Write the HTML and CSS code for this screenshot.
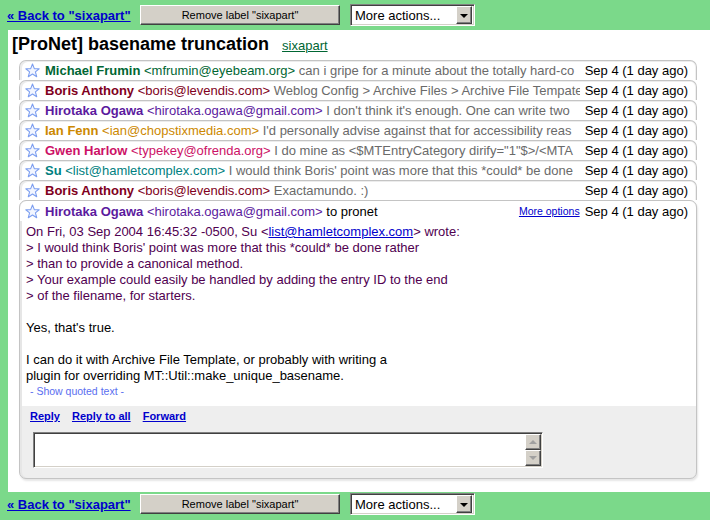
FILE: index.html
```html
<!DOCTYPE html>
<html>
<head>
<meta charset="utf-8">
<link rel="stylesheet" href="styles.css">
</head>
<body>
<div class="bar">
  <a class="back" href="#">« Back to "sixapart"</a>
  <button class="btn">Remove label "sixapart"</button>
  <div class="select"><span>More actions...</span><span class="drop"><span class="tri"></span></span></div>
</div>
<div class="main">
  <div class="title"><h1>[ProNet] basename truncation</h1><a class="label" href="#">sixapart</a></div>
  <div class="thread">
    <div class="row">
      <svg class="star" viewBox="0 0 15 15"><polygon points="7.5,1 9.3,5.6 14.2,5.8 10.4,8.9 11.7,13.7 7.5,11 3.3,13.7 4.6,8.9 0.8,5.8 5.7,5.6"/></svg>
      <span class="summary"><span class="who c-green">Michael Frumin</span> <span class="c-green">&lt;mfrumin@eyebeam.org&gt;</span> <span class="snip">can i gripe for a minute about the totally hard-co</span></span>
      <span class="date">Sep 4 (1 day ago)</span>
    </div>
    <div class="row">
      <svg class="star" viewBox="0 0 15 15"><polygon points="7.5,1 9.3,5.6 14.2,5.8 10.4,8.9 11.7,13.7 7.5,11 3.3,13.7 4.6,8.9 0.8,5.8 5.7,5.6"/></svg>
      <span class="summary"><span class="who c-red">Boris Anthony</span> <span class="c-red">&lt;boris@levendis.com&gt;</span> <span class="snip">Weblog Config &gt; Archive Files &gt; Archive File Tempate</span></span>
      <span class="date">Sep 4 (1 day ago)</span>
    </div>
    <div class="row">
      <svg class="star" viewBox="0 0 15 15"><polygon points="7.5,1 9.3,5.6 14.2,5.8 10.4,8.9 11.7,13.7 7.5,11 3.3,13.7 4.6,8.9 0.8,5.8 5.7,5.6"/></svg>
      <span class="summary"><span class="who c-purple">Hirotaka Ogawa</span> <span class="c-purple">&lt;hirotaka.ogawa@gmail.com&gt;</span> <span class="snip">I don't think it's enough. One can write two</span></span>
      <span class="date">Sep 4 (1 day ago)</span>
    </div>
    <div class="row">
      <svg class="star" viewBox="0 0 15 15"><polygon points="7.5,1 9.3,5.6 14.2,5.8 10.4,8.9 11.7,13.7 7.5,11 3.3,13.7 4.6,8.9 0.8,5.8 5.7,5.6"/></svg>
      <span class="summary"><span class="who c-orange">Ian Fenn</span> <span class="c-orange">&lt;ian@chopstixmedia.com&gt;</span> <span class="snip">I'd personally advise against that for accessibility reas</span></span>
      <span class="date">Sep 4 (1 day ago)</span>
    </div>
    <div class="row">
      <svg class="star" viewBox="0 0 15 15"><polygon points="7.5,1 9.3,5.6 14.2,5.8 10.4,8.9 11.7,13.7 7.5,11 3.3,13.7 4.6,8.9 0.8,5.8 5.7,5.6"/></svg>
      <span class="summary"><span class="who c-pink">Gwen Harlow</span> <span class="c-pink">&lt;typekey@ofrenda.org&gt;</span> <span class="snip">I do mine as &lt;$MTEntryCategory dirify="1"$&gt;/&lt;MTA</span></span>
      <span class="date">Sep 4 (1 day ago)</span>
    </div>
    <div class="row">
      <svg class="star" viewBox="0 0 15 15"><polygon points="7.5,1 9.3,5.6 14.2,5.8 10.4,8.9 11.7,13.7 7.5,11 3.3,13.7 4.6,8.9 0.8,5.8 5.7,5.6"/></svg>
      <span class="summary"><span class="who c-teal">Su</span> <span class="c-teal">&lt;list@hamletcomplex.com&gt;</span> <span class="snip">I would think Boris' point was more that this *could* be done</span></span>
      <span class="date">Sep 4 (1 day ago)</span>
    </div>
    <div class="row">
      <svg class="star" viewBox="0 0 15 15"><polygon points="7.5,1 9.3,5.6 14.2,5.8 10.4,8.9 11.7,13.7 7.5,11 3.3,13.7 4.6,8.9 0.8,5.8 5.7,5.6"/></svg>
      <span class="summary"><span class="who c-red">Boris Anthony</span> <span class="c-red">&lt;boris@levendis.com&gt;</span> <span class="snip">Exactamundo. :)</span></span>
      <span class="date">Sep 4 (1 day ago)</span>
    </div>
    <div class="card">
      <div class="card-head">
        <svg class="star" viewBox="0 0 15 15"><polygon points="7.5,1 9.3,5.6 14.2,5.8 10.4,8.9 11.7,13.7 7.5,11 3.3,13.7 4.6,8.9 0.8,5.8 5.7,5.6"/></svg>
        <span class="summary"><span class="who c-purple">Hirotaka Ogawa</span> <span class="c-purple">&lt;hirotaka.ogawa@gmail.com&gt;</span> <span>to pronet</span></span>
        <a class="more" href="#">More options</a>
        <span class="date">Sep 4 (1 day ago)</span>
      </div>
      <div class="card-body">
        <div class="quote">On Fri, 03 Sep 2004 16:45:32 -0500, Su &lt;<a href="#">list@hamletcomplex.com</a>&gt; wrote:<br>
&gt; I would think Boris' point was more that this *could* be done rather<br>
&gt; than to provide a canonical method.<br>
&gt; Your example could easily be handled by adding the entry ID to the end<br>
&gt; of the filename, for starters.</div>
        <div class="para">Yes, that's true.</div>
        <div class="para">I can do it with Archive File Template, or probably with writing a<br>plugin for overriding MT::Util::make_unique_basename.</div>
        <div class="show-quoted">- Show quoted text -</div>
      </div>
      <div class="card-foot">
        <div class="actions"><a href="#">Reply</a><a href="#">Reply to all</a><a href="#">Forward</a></div>
        <div class="replybox">
          <textarea class="reply-input"></textarea>
          <div class="scroll">
            <span class="sbtn"><span class="up"></span></span>
            <span class="sbtn"><span class="down"></span></span>
          </div>
        </div>
      </div>
    </div>
  </div>
</div>
<div class="bar bar-bottom">
  <a class="back" href="#">« Back to "sixapart"</a>
  <button class="btn">Remove label "sixapart"</button>
  <div class="select"><span>More actions...</span><span class="drop"><span class="tri"></span></span></div>
</div>
</body>
</html>
```
FILE: styles.css
```css
* { box-sizing: border-box; }
html, body { margin: 0; padding: 0; }
body {
  background: #7bd98a;
  font-family: "Liberation Sans", Arial, sans-serif;
  font-size: 13px;
  color: #000;
  width: 710px;
  height: 520px;
  overflow: hidden;
}
a { color: #0000cc; }

.bar {
  height: 30px;
  display: flex;
  align-items: center;
  padding-left: 7px;
}
.bar-bottom {
  height: 28px;
  padding-bottom: 4px;
}
.back {
  width: 133px;
  flex: none;
  font-weight: bold;
  font-size: 13px;
  color: #0000cc;
  text-decoration: underline;
  white-space: nowrap;
}
.btn {
  width: 200px;
  height: 20px;
  margin: 0 10px 0 0;
  padding: 0;
  font-family: "Liberation Sans", Arial, sans-serif;
  font-size: 11px;
  color: #000;
  background: #d4d0c8;
  border: 1px solid;
  border-color: #fff #404040 #404040 #fff;
  box-shadow: inset -1px -1px 0 #808080;
  flex: none;
}
.select {
  width: 125px;
  height: 22px;
  display: flex;
  align-items: center;
  background: #fff;
  border: 1px solid;
  border-color: #808080 #fff #fff #808080;
  box-shadow: inset 1px 1px 0 #404040, inset -1px -1px 0 #d4d0c8;
  padding-left: 4px;
  font-size: 13px;
  flex: none;
}
.drop {
  margin-left: auto;
  margin-right: 2px;
  width: 16px;
  height: 18px;
  background: #d4d0c8;
  border: 1px solid;
  border-color: #fff #404040 #404040 #fff;
  box-shadow: inset -1px -1px 0 #808080;
  display: flex;
  align-items: center;
  justify-content: center;
}
.tri {
  width: 0;
  height: 0;
  border-left: 4px solid transparent;
  border-right: 4px solid transparent;
  border-top: 4px solid #000;
  margin-top: 1px;
}

.main {
  margin-left: 8px;
  height: 462px;
  background: #fff;
  padding: 2px 13px 0 4px;
  overflow: hidden;
}
.title {
  display: flex;
  align-items: baseline;
  height: 24px;
  margin-bottom: 4px;
}
.title h1 {
  margin: 0;
  font-size: 18px;
  line-height: 24px;
  font-weight: bold;
}
.label {
  margin-left: 13px;
  font-size: 13px;
  color: #006633;
  text-decoration: underline;
}

.thread { margin-left: 7px; }
.row, .card-head {
  display: flex;
  align-items: center;
  height: 20px;
  padding: 0 8px 0 5px;
  white-space: nowrap;
  background: #fff;
}
.row {
  border: 1px solid #c4c4c4;
  border-bottom: 0;
  border-radius: 7px 7px 0 0;
  box-shadow: inset 2px 1px 0 #ececec, inset -1px 0 0 #f0f0f0;
}
.star {
  width: 15px;
  height: 15px;
  flex: none;
  margin-right: 5px;
}
.star polygon {
  fill: #f2f6ff;
  stroke: #7d9ff0;
  stroke-width: 1.1;
  stroke-linejoin: round;
}
.summary {
  flex: 1;
  min-width: 0;
  overflow: hidden;
  white-space: nowrap;
}
.who { font-weight: bold; }
.snip { color: #6a6a6a; }
.date { flex: none; margin-left: 5px; }
.c-green { color: #006633; }
.c-red { color: #800020; }
.c-purple { color: #5b1a9e; }
.c-orange { color: #cc8800; }
.c-pink { color: #cc1166; }
.c-teal { color: #008080; }

.card {
  border: 1px solid #c4c4c4;
  border-radius: 7px;
  background: #eeeeee;
  box-shadow: 1px 2px 2px rgba(0,0,0,0.10), inset 2px 0 0 #e6e6e6;
  overflow: hidden;
}
.card-head { border-radius: 7px 7px 0 0; }
.more {
  flex: none;
  font-size: 10.5px;
  color: #0000cc;
  text-decoration: underline;
  margin-left: 4px;
}
.card-body {
  background: #fff;
  margin-left: 2px;
  padding: 3px 6px 8px 4px;
  line-height: 16px;
  height: 185px;
}
.quote { color: #500050; }
.quote a { color: #0000cc; }
.para { margin-top: 16px; }
.show-quoted {
  font-size: 10.5px;
  line-height: 14px;
  color: #5a6ef0;
  padding-left: 4px;
}
.card-foot {
  height: 72px;
  padding: 4px 0 0 10px;
}
.actions {
  display: flex;
  gap: 12px;
  line-height: 12px;
  height: 12px;
}
.actions a {
  font-size: 11px;
  font-weight: bold;
  color: #0000cc;
  text-decoration: underline;
}
.replybox {
  margin: 10px 0 0 3px;
  width: 510px;
  height: 36px;
  display: flex;
  border: 1px solid;
  border-color: #808080 #fff #fff #808080;
  box-shadow: inset 1px 1px 0 #404040, inset -1px -1px 0 #d4d0c8;
  background: #fff;
  padding: 1px;
}
.reply-input {
  flex: 1;
  border: 0;
  resize: none;
  outline: none;
  background: transparent;
  margin: 0;
  padding: 0;
}
.scroll {
  width: 16px;
  display: flex;
  flex-direction: column;
}
.sbtn {
  flex: 1;
  background: #d4d0c8;
  border: 1px solid;
  border-color: #fff #404040 #404040 #fff;
  box-shadow: inset -1px -1px 0 #808080;
  display: flex;
  align-items: center;
  justify-content: center;
}
.up {
  width: 0; height: 0;
  border-left: 4px solid transparent;
  border-right: 4px solid transparent;
  border-bottom: 4px solid #a0a0a0;
}
.down {
  width: 0; height: 0;
  border-left: 4px solid transparent;
  border-right: 4px solid transparent;
  border-top: 4px solid #a0a0a0;
}
```
